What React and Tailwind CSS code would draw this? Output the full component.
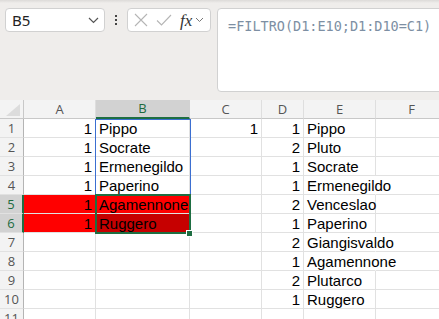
import React from "react";

const COLS = [
  { k: "A", w: "w-[72px]" },
  { k: "B", w: "w-[94px]" },
  { k: "C", w: "w-[72px]" },
  { k: "D", w: "w-[42px]" },
  { k: "E", w: "w-[72px]" },
  { k: "F", w: "w-[72px]" },
];

const data = {
  1: { A: "1", B: "Pippo", C: "1", D: "1", E: "Pippo" },
  2: { A: "1", B: "Socrate", D: "2", E: "Pluto" },
  3: { A: "1", B: "Ermenegildo", D: "1", E: "Socrate" },
  4: { A: "1", B: "Paperino", D: "1", E: "Ermenegildo" },
  5: { A: "1", B: "Agamennone", D: "2", E: "Venceslao" },
  6: { A: "1", B: "Ruggero", D: "1", E: "Paperino" },
  7: { D: "2", E: "Giangisvaldo" },
  8: { D: "1", E: "Agamennone" },
  9: { D: "2", E: "Plutarco" },
  10: { D: "1", E: "Ruggero" },
  11: {},
};

const overflowE = { 4: true, 7: true, 8: true };

function Cell({ col, row }) {
  const v = data[row][col.k];
  const isNum = v !== undefined && /^\d+$/.test(v);
  let bg = "bg-white";
  if ((col.k === "A" && (row === 5 || row === 6)) || (col.k === "B" && row === 5)) bg = "bg-[#ff0000]";
  if (col.k === "B" && row === 6) bg = "bg-[#c60000]";
  const noRight = col.k === "E" && overflowE[row];
  return (
    <div
      className={`${col.w} h-[19px] shrink-0 ${bg} border-b border-[#e1e1e1] ${noRight ? "border-r border-r-transparent" : "border-r"} relative flex items-center ${isNum ? "justify-end pr-[3px]" : "justify-start pl-[3px]"}`}
    >
      {v !== undefined && (
        <span className="relative z-10 whitespace-nowrap text-[15px] leading-none text-black font-['Liberation_Sans',Arial,sans-serif]">
          {v}
        </span>
      )}
    </div>
  );
}

export default function App() {
  const rows = [1, 2, 3, 4, 5, 6, 7, 8, 9, 10, 11];
  return (
    <div className="w-[439px] h-[319px] overflow-hidden bg-white relative font-['Open_Sans',sans-serif]">
      {/* Toolbar */}
      <div className="h-[100px] bg-[#efedeb] flex items-start pt-[8px] pl-[5px] relative">
        <div className="absolute top-0 left-0 right-0 h-[3px] bg-gradient-to-b from-[#dcdad8] to-[#efedeb]" />
        <div className="shrink-0 w-[100px] h-[24px] bg-white border border-[#d1d1d1] rounded-[4px] flex items-center justify-between pl-[6px] pr-[5px]">
          <span className="text-[15px] text-[#222] font-['Noto_Sans',sans-serif] leading-none">B5</span>
          <svg width="11" height="7" viewBox="0 0 11 7">
            <path d="M1 1l4.5 4.5L10 1" fill="none" stroke="#555" strokeWidth="1.2" />
          </svg>
        </div>
        <div className="shrink-0 w-[22px] h-[24px] flex flex-col items-center justify-center gap-[2px]">
          <div className="w-[2px] h-[2px] bg-[#444]" />
          <div className="w-[2px] h-[2px] bg-[#444]" />
          <div className="w-[2px] h-[2px] bg-[#444]" />
        </div>
        <div className="shrink-0 w-[84px] h-[24px] bg-white border border-[#d1d1d1] rounded-[4px] flex items-center pl-[6px]">
          <svg width="14" height="14" viewBox="0 0 14 14" className="mr-[8px]">
            <path d="M1 1l12 12M13 1L1 13" stroke="#b5b5b5" strokeWidth="1.1" fill="none" />
          </svg>
          <svg width="16" height="12" viewBox="0 0 16 12" className="mr-[8px]">
            <path d="M1 6.5l4.5 4.5L15 1" stroke="#b5b5b5" strokeWidth="1.1" fill="none" />
          </svg>
          <span className="italic text-[17px] leading-none text-[#333] font-['Liberation_Serif',serif] mr-[3px]">fx</span>
          <svg width="9" height="6" viewBox="0 0 9 6">
            <path d="M1 1l3.5 3.5L8 1" fill="none" stroke="#777" strokeWidth="1" />
          </svg>
        </div>
        <div className="shrink-0 ml-[6px] w-[260px] h-[84px] bg-white border border-[#d1d1d1] rounded-[4px] pl-[10px] pt-[4px]">
          <span className="text-[13.5px] text-[#7d8fa3] font-['DejaVu_Sans_Mono',monospace] whitespace-nowrap">
            =FILTRO(D1:E10;D1:D10=C1)
          </span>
        </div>
      </div>

      {/* Grid */}
      <div className="flex flex-col relative">
        {/* Header row */}
        <div className="flex h-[19px]">
          <div className="w-[24px] shrink-0 h-[19px] bg-[#f3f3f3] border-r border-b border-[#c8c8c8] relative">
            <svg width="14" height="12" viewBox="0 0 14 12" className="absolute right-[3px] bottom-[2px]">
              <path d="M14 0L14 12L0 12Z" fill="#dcdcdc" />
            </svg>
          </div>
          {COLS.map((c) => (
            <div
              key={c.k}
              className={`${c.w} shrink-0 h-[19px] flex items-center justify-center text-[13px] leading-none ${
                c.k === "B"
                  ? "bg-[#d2d2d2] text-[#1d6b3f] border-b-2 border-b-[#1e6e42] border-r border-r-[#d2d2d2]"
                  : "bg-[#f3f3f3] text-[#555] border-b border-b-[#c8c8c8] border-r border-r-[#dedede]"
              }`}
            >
              {c.k}
            </div>
          ))}
        </div>
        {rows.map((r) => (
          <div key={r} className="flex">
            <div
              className={`w-[24px] shrink-0 h-[19px] flex items-center justify-center text-[13px] leading-none border-b border-[#e1e1e1] ${
                r === 5 || r === 6
                  ? "bg-[#d2d2d2] text-[#1d6b3f] border-r-2 border-r-[#1e6e42]"
                  : "bg-[#f3f3f3] text-[#555] border-r border-r-[#b4b4b4]"
              }`}
            >
              {r}
            </div>
            {COLS.map((c) => (
              <Cell key={c.k} col={c} row={r} />
            ))}
          </div>
        ))}

        {/* Spill range border B1:B6 */}
        <div className="absolute left-[95px] top-[19px] w-[96px] h-[114px] border border-[#3b6fd1] pointer-events-none z-20" />
        {/* Selection B5:B6 */}
        <div className="absolute left-[95px] top-[94px] w-[96px] h-[40px] border-2 border-[#1e6e42] pointer-events-none z-30" />
        <div className="absolute left-[186px] top-[130px] w-[7px] h-[7px] bg-[#1e6e42] border border-white z-40" />
      </div>
    </div>
  );
}
